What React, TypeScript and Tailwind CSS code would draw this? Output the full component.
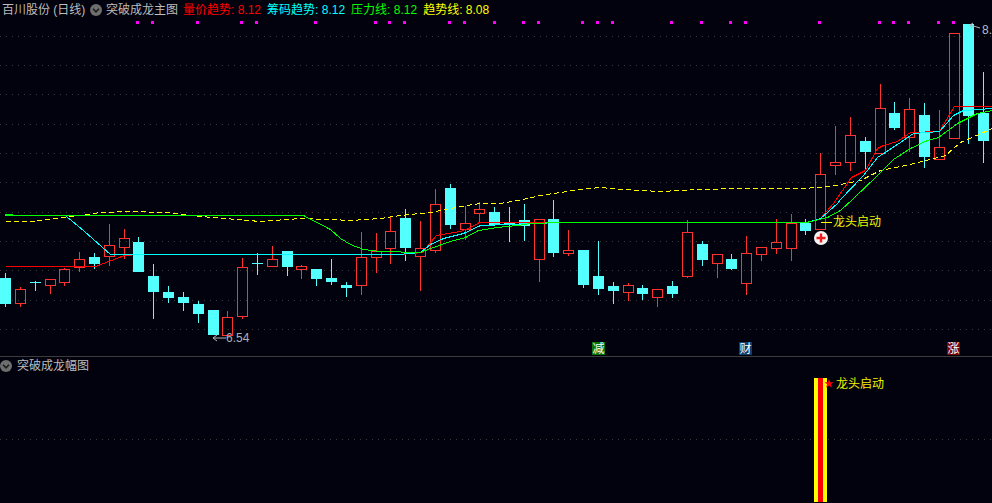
import React from 'react'

// [center x, high, low, body top, body bottom, colour]
type Candle = [number, number, number, number, number, 'r' | 'c']

const candles: Candle[] = [
  [5.5, 273, 307, 278, 304, 'c'],
  [20.5, 287, 307, 289, 304, 'r'],
  [35.5, 281, 291, 282, 283, 'c'],
  [50.5, 279, 294, 279, 286, 'r'],
  [64.5, 268, 286, 269, 283, 'r'],
  [79.5, 252, 272, 259, 268, 'r'],
  [94.5, 253, 269, 257, 264, 'c'],
  [109.5, 224, 266, 245, 257, 'r'],
  [124.5, 229, 259, 238, 248, 'r'],
  [138.5, 237, 272, 242, 272, 'c'],
  [153.5, 264, 319, 276, 292, 'c'],
  [168.5, 286, 303, 292, 298, 'c'],
  [183.5, 292, 311, 297, 303, 'c'],
  [198.5, 301, 323, 304, 314, 'c'],
  [213.5, 310, 335, 310, 335, 'c'],
  [227.5, 311, 336, 317, 336, 'r'],
  [242.5, 258, 319, 267, 317, 'r'],
  [257.5, 253, 275, 263, 264, 'c'],
  [272.5, 246, 267, 259, 267, 'r'],
  [287.5, 251, 276, 251, 267, 'c'],
  [301.5, 265, 279, 266, 270, 'r'],
  [316.5, 269, 286, 269, 279, 'c'],
  [331.5, 259, 285, 278, 282, 'c'],
  [346.5, 282, 297, 285, 288, 'c'],
  [361.5, 232, 295, 257, 286, 'r'],
  [376.5, 233, 273, 251, 258, 'r'],
  [390.5, 216, 264, 231, 249, 'r'],
  [405.5, 209, 261, 218, 248, 'c'],
  [420.5, 221, 291, 248, 257, 'r'],
  [435.5, 189, 253, 204, 251, 'r'],
  [450.5, 184, 229, 188, 225, 'c'],
  [465.5, 206, 240, 223, 230, 'r'],
  [479.5, 202, 223, 209, 214, 'r'],
  [494.5, 207, 226, 212, 225, 'c'],
  [509.5, 207, 242, 223, 225, 'c'],
  [524.5, 204, 241, 220, 226, 'c'],
  [539.5, 219, 282, 219, 260, 'r'],
  [553.5, 200, 257, 219, 253, 'c'],
  [568.5, 230, 256, 250, 254, 'r'],
  [583.5, 250, 288, 250, 285, 'c'],
  [598.5, 241, 295, 276, 289, 'c'],
  [613.5, 282, 304, 286, 291, 'c'],
  [628.5, 283, 301, 285, 293, 'r'],
  [642.5, 285, 300, 288, 294, 'c'],
  [657.5, 289, 307, 289, 298, 'r'],
  [672.5, 281, 298, 286, 294, 'c'],
  [687.5, 220, 278, 232, 277, 'r'],
  [702.5, 241, 266, 244, 260, 'c'],
  [717.5, 254, 278, 254, 264, 'r'],
  [731.5, 254, 270, 259, 269, 'c'],
  [746.5, 236, 295, 253, 284, 'r'],
  [761.5, 247, 261, 247, 255, 'r'],
  [776.5, 219, 254, 242, 249, 'r'],
  [791.5, 214, 261, 223, 249, 'r'],
  [805.5, 219, 235, 223, 231, 'c'],
  [820.5, 153, 230, 174, 230, 'r'],
  [835.5, 126, 175, 162, 166, 'r'],
  [850.5, 117, 171, 135, 163, 'r'],
  [865.5, 137, 170, 141, 152, 'c'],
  [880.5, 84, 154, 108, 154, 'r'],
  [894.5, 102, 130, 113, 128, 'c'],
  [909.5, 98, 152, 109, 138, 'r'],
  [924.5, 103, 168, 115, 157, 'c'],
  [939.5, 110, 160, 147, 160, 'r'],
  [954.5, 33, 139, 33, 139, 'r'],
  [968.5, 24, 144, 24, 116, 'c'],
  [983.5, 72, 163, 113, 141, 'c'],
]

const gridY = [36, 65, 94, 124, 153, 182, 212, 241, 270, 300, 329]
const dots = [137, 152, 197, 241, 256, 315, 375, 389, 404, 449, 464, 494, 523, 538, 582, 597, 612, 671, 701, 730, 745, 819, 879, 893, 908, 938, 953]

const yellowLine =
  '5,221 30,221 65,217 100,212 130,211 165,212 200,216 260,221 300,218 330,219 350,220 380,218 400,215 430,212 460,206 480,203 500,203 522,199 540,195 580,189 600,187 610,188 640,190 660,191 700,189 740,188 800,188 820,187 835,185 860,180 880,170 905,165 930,159 945,155 960,142 992,128'
const greenLine =
  '5,215 303,215 330,229 340,238 350,244 363,249 380,251 420,252 430,248 450,241 465,237 478,230 497,227 517,225 530,223 560,222 806,222 827,217 840,210 852,199 877,175 893,159 910,148 927,140 938,137 957,123 977,113 992,110'
const cyanLine =
  '66,216 83,230 110,254 398,254 420,252 430,244 443,238 463,233 480,225 507,224 560,222 807,222 820,218 837,203 840,199 863,175 877,157 900,142 913,133 939,131 953,115 963,110 992,108'
const redLine =
  '5,266 95,266 124,255 140,254 400,254 422,252 430,242 436,235 460,231 470,227 479,222 517,222 784,222 806,222 820,218 833,203 851,177 865,170 877,148 883,145 897,141 910,132 939,131 954,106 992,106'

function ChevronBadge() {
  return (
    <svg width="12" height="12" viewBox="0 0 12 12" className="shrink-0">
      <circle cx="6" cy="6" r="6" fill="#6e6e6e" />
      <path d="M3 4.8 6 7.8 9 4.8" fill="none" stroke="#1c1c1c" strokeWidth="1.6" />
    </svg>
  )
}

function Legend({ label, value, color }: { label: string; value: string; color: string }) {
  return (
    <span className={color}>
      {label}: {value}
    </span>
  )
}

function MainChart() {
  return (
    <svg width="992" height="336" viewBox="0 20 992 336" className="block">
      {gridY.map((y) => (
        <line key={y} x1="0" x2="992" y1={y + 0.5} y2={y + 0.5} stroke="#3a3a3a" strokeDasharray="1 5" />
      ))}
      {dots.map((x) => (
        <rect key={x} x={x - 1} y="21" width="3" height="3" fill="#ff00ff" />
      ))}

      <g shapeRendering="crispEdges">
        {candles.map(([x, high, low, top, bottom, c]) =>
          c === 'c' ? (
            <g key={x}>
              <line x1={x} x2={x} y1={high} y2={low} stroke="#54ffff" />
              <rect x={x - 5.5} y={top} width="11" height={bottom - top} fill="#54ffff" />
            </g>
          ) : (
            <g key={x} stroke="#ff3232" fill="none">
              <line x1={x} x2={x} y1={high} y2={top} />
              <line x1={x} x2={x} y1={bottom} y2={low} />
              <rect x={x - 5} y={top + 0.5} width="10" height={bottom - top - 1} />
            </g>
          ),
        )}
      </g>

      <g fill="none" shapeRendering="crispEdges" transform="translate(0.5 0.5)">
        <polyline points={yellowLine} stroke="#ffff00" strokeDasharray="5 3" />
        <polyline points={redLine} stroke="#ff0000" />
        <polyline points={cyanLine} stroke="#00ffff" />
        <polyline points={greenLine} stroke="#00ff00" />
      </g>
      <rect x="5" y="214" width="8" height="2" fill="#00ff00" />

      {/* low / high markers */}
      <path d="M213 338H226M213 338l4-3M213 338l4 3" stroke="#b4b4b4" fill="none" />
      <text x="226" y="342" fontSize="12" fill="#a9b2bc">6.54</text>
      <path d="M970 25l10 3M970 25l3-2M970 25l2 3" stroke="#b4b4b4" fill="none" />
      <text x="982" y="34" fontSize="12" fill="#b4bcc6">8.</text>

      {/* signal */}
      <path d="M821 222.5H832" stroke="#ffff00" />
      <text x="833" y="226" fontSize="12" fill="#f2f200">龙头启动</text>
      <circle cx="821" cy="238" r="7" fill="#f4f4f4" />
      <path d="M816.5 238h9M821 233.5v9" stroke="#f01c1c" strokeWidth="2.4" />

      {/* badges */}
      <rect x="592" y="342" width="13" height="13" fill="#087308" />
      <text x="592.5" y="353" fontSize="12" fill="#fff">减</text>
      <rect x="739" y="342" width="13" height="13" fill="#0c3d6b" />
      <text x="739.5" y="353" fontSize="12" fill="#fff">财</text>
      <rect x="947" y="342" width="13" height="13" fill="#7a0505" />
      <text x="947.5" y="353" fontSize="12" fill="#fff">涨</text>
    </svg>
  )
}

function AmplitudeChart() {
  return (
    <svg width="992" height="128" viewBox="0 375 992 128" className="block">
      <line x1="0" x2="992" y1="439.5" y2="439.5" stroke="#3a3a3a" strokeDasharray="1 5" />
      <rect x="814" y="378" width="13" height="124" fill="#ffff00" />
      <rect x="818" y="378" width="5" height="124" fill="#ff0000" />
      <polygon points="829,379 830.2,382.2 833.5,382.2 830.9,384.3 831.9,387.6 829,385.7 826.1,387.6 827.1,384.3 824.5,382.2 827.8,382.2" fill="#ff0000" />
      <text x="836" y="388" fontSize="12" fill="#f2f200">龙头启动</text>
    </svg>
  )
}

export default function App() {
  return (
    <div className="w-[992px] h-[503px] overflow-hidden bg-[#02020e] text-[12px] font-['Liberation_Sans','Noto_Sans_CJK_SC',sans-serif]">
      <div className="h-[20px] flex items-center pl-[2px] leading-none text-[#bdbdbd] whitespace-nowrap">
        <span className="w-[88px]">百川股份 (日线)</span>
        <ChevronBadge />
        <span className="ml-[4px] w-[77px]">突破成龙主图</span>
        <div className="flex gap-[6px]">
          <Legend label="量价趋势" value="8.12" color="text-[#ff0000]" />
          <Legend label="筹码趋势" value="8.12" color="text-[#00ffff]" />
          <Legend label="压力线" value="8.12" color="text-[#00ff00]" />
          <Legend label="趋势线" value="8.08" color="text-[#ffff00]" />
        </div>
      </div>
      <MainChart />
      <div className="border-t border-[#3c3c3c] h-[19px] flex items-center gap-[5px] text-[#bdbdbd]">
        <ChevronBadge />
        <span className="leading-none">突破成龙幅图</span>
      </div>
      <AmplitudeChart />
    </div>
  )
}
